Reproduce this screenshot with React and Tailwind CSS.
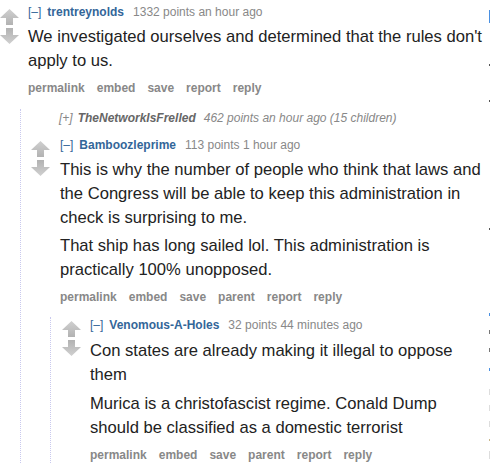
import React from 'react';

const font = { fontFamily: '"Liberation Sans", Arial, sans-serif' };

function Arrow({ down }) {
  const id = down ? 'gd' : 'gu';
  return (
    <svg width="19" height="16" viewBox="0 0 19 16" className={down ? 'rotate-180' : ''}>
      <defs>
        <linearGradient id={id} x1="0" y1="0" x2="0" y2="1">
          <stop offset="0" stopColor="#d0d0d0" />
          <stop offset="1" stopColor="#b2b2b2" />
        </linearGradient>
      </defs>
      <path d="M9.5 0 L19 9 L13 9 L13 16 L6 16 L6 9 L0 9 Z" fill={`url(#${id})`} />
    </svg>
  );
}

function Votes({ className }) {
  return (
    <div className={`flex flex-col gap-[3px] shrink-0 ${className}`}>
      <Arrow />
      <Arrow down />
    </div>
  );
}

function Tagline({ user, points, time }) {
  return (
    <div className="text-[12px] leading-[16px] text-[#888] whitespace-nowrap">
      <span className="text-[#369]">[–]</span>
      <span className="ml-[6px] font-bold text-[#369]">{user}</span>
      <span className="ml-[9px]">{points} points {time}</span>
    </div>
  );
}

function Buttons({ items }) {
  return (
    <div className="flex gap-[12px] text-[12px] leading-[16px] font-bold text-[#888]">
      {items.map((b) => (
        <span key={b}>{b}</span>
      ))}
    </div>
  );
}

export default function App() {
  return (
    <div className="w-[490px] h-[471px] overflow-hidden bg-white flex" style={font}>
      <main className="w-[489px] shrink-0 pt-[4px]">
        {/* top level comment */}
        <div className="flex">
          <Votes className="pt-[5px] w-[28px]" />
          <div className="flex-1">
            <Tagline user="trentreynolds" points="1332" time="an hour ago" />
            <div className="mt-[5px] text-[16.6px] leading-[24px] text-[#222] pr-[4px]">
              We investigated ourselves and determined that the rules don't apply to us.
            </div>
            <div className="mt-[7px]">
              <Buttons items={['permalink', 'embed', 'save', 'report', 'reply']} />
            </div>
          </div>
        </div>

        {/* children */}
        <div className="ml-[20px] mt-[13px] border-l border-dotted border-[#c9c9ee] pt-[1px]">
          <div className="pl-[38px] text-[12px] leading-[16px] text-[#888] italic whitespace-nowrap">
            [+]<span className="ml-[5px] font-bold text-[#666]">TheNetworkIsFrelled</span>
            <span className="ml-[8px]">462 points an hour ago (15 children)</span>
          </div>

          <div className="flex mt-[11px]">
            <Votes className="pl-[10px] w-[39px] pt-[4px]" />
            <div className="flex-1">
              <Tagline user="Bamboozleprime" points="113" time="1 hour ago" />
              <div className="mt-[5px] text-[16.6px] leading-[24px] text-[#222] pr-[4px]">
                <p>This is why the number of people who think that laws and the Congress will be able to keep this administration in check is surprising to me.</p>
                <p className="mt-[4px]">That ship has long sailed lol. This administration is practically 100% unopposed.</p>
              </div>
              <div className="mt-[7px]">
                <Buttons items={['permalink', 'embed', 'save', 'parent', 'report', 'reply']} />
              </div>

              {/* grandchild */}
              <div className="-ml-[10px] mt-[12px] border-l border-dotted border-[#c9c9ee]">
                <div className="flex">
                  <Votes className="pl-[11px] w-[39px] pt-[4px]" />
                  <div className="flex-1">
                    <Tagline user="Venomous-A-Holes" points="32" time="44 minutes ago" />
                    <div className="mt-[6px] text-[16.6px] leading-[24px] text-[#222] pr-[10px]">
                      <p>Con states are already making it illegal to oppose them</p>
                      <p className="mt-[5px]">Murica is a christofascist regime. Conald Dump should be classified as a domestic terrorist</p>
                    </div>
                    <div className="mt-[7px]">
                      <Buttons items={['permalink', 'embed', 'save', 'parent', 'report', 'reply']} />
                    </div>
                  </div>
                </div>
              </div>
            </div>
          </div>
        </div>
      </main>

      {/* clipped sidebar edge */}
      <aside className="flex-1 flex flex-col">
        <div className="mt-[10px] h-[13px] bg-[#4a90e2]" />
        <div className="mt-[41px] h-[2px] bg-[#555]" />
        <div className="mt-[34px] h-[2px] bg-[#555]" />
        <div className="mt-[126px] h-[2px] bg-[#555]" />
        <div className="mt-[83px] h-[3px] bg-[#4a90e2]" />
        <div className="mt-[14px] h-[4px] bg-[#777]" />
        <div className="mt-[14px] h-[4px] bg-[#777]" />
        <div className="mt-[16px] h-[3px] bg-[#4a90e2]" />
        <div className="mt-[18px] h-[6px] bg-[#ddd]" />
        <div className="mt-[10px] h-[6px] bg-[#ddd]" />
        <div className="mt-[10px] h-[6px] bg-[#ddd]" />
        <div className="mt-[12px] h-[2px] bg-[#c9b78a]" />
        <div className="mt-[10px] h-[8px] bg-[#ddd]" />
      </aside>
    </div>
  );
}
